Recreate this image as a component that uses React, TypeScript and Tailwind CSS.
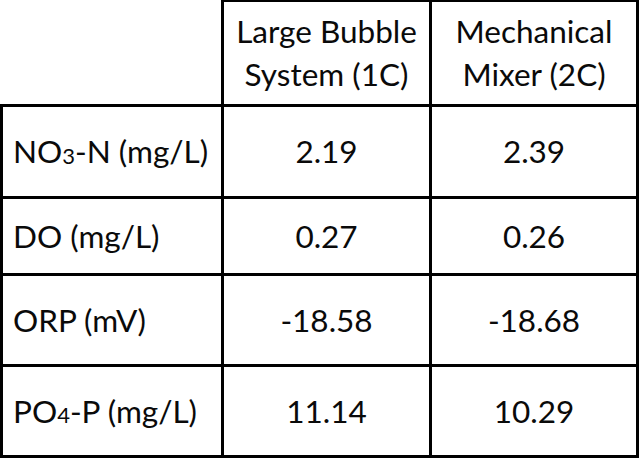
import React from "react";

const font = { fontFamily: "Lato, 'Open Sans', sans-serif" };

function Cell({ children, first, last, lastRow, top }: { children?: React.ReactNode; first?: boolean; last?: boolean; lastRow?: boolean; top?: boolean }) {
  return (
    <div
      className={[
        "flex items-center border-black border-l-[3px]",
        top ? "border-t-2" : "border-t-[3px]",
        last ? "border-r-[3px]" : "",
        lastRow ? "border-b-[3px]" : "",
        first ? "justify-start pl-[10px]" : "justify-center text-center",
      ].join(" ")}
    >
      {children}
    </div>
  );
}

export default function App() {
  const sub = "text-[22px] relative top-[4px] align-baseline";
  const rows: [React.ReactNode, string, string][] = [
    [<>NO<sub className={sub}>3</sub>-N (mg/L)</>, "2.19", "2.39"],
    ["DO (mg/L)", "0.27", "0.26"],
    ["ORP (mV)", "-18.58", "-18.68"],
    [<>PO<sub className={sub}>4</sub>-P (mg/L)</>, "11.14", "10.29"],
  ];
  return (
    <div className="w-[640px] h-[459px] bg-white text-[#0a0a0a] text-[31.5px] leading-[43px]" style={font}>
      <div className="grid grid-cols-[221px_208px_210px] grid-rows-[104px_92px_77px_91px_94px]">
        <div />
        <Cell top>
          <span>Large Bubble<br />System (1C)</span>
        </Cell>
        <Cell top last>
          <span>Mechanical<br />Mixer (2C)</span>
        </Cell>
        {rows.map((r, i) => (
          <React.Fragment key={i}>
            <Cell first lastRow={i === 3}>{r[0]}</Cell>
            <Cell lastRow={i === 3}>{r[1]}</Cell>
            <Cell last lastRow={i === 3}>{r[2]}</Cell>
          </React.Fragment>
        ))}
      </div>
    </div>
  );
}
